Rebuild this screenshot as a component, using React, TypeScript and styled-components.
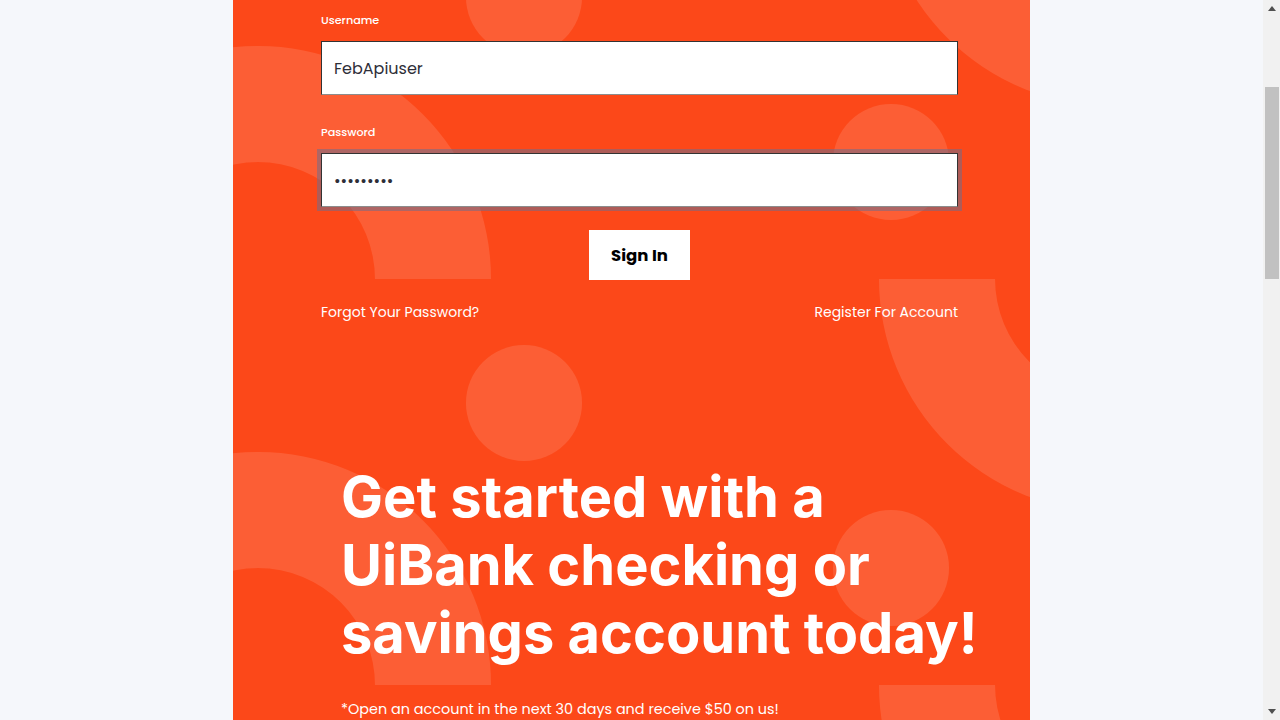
import styled, { createGlobalStyle } from "styled-components";

const GlobalStyle = createGlobalStyle`
    html, body {
        margin: 0;
        padding: 0;
        background: #f5f7fb;
    }
    * {
        box-sizing: border-box;
    }
`;

const Shell = styled.div`
    display: flex;
    align-items: flex-start;
`;

const Page = styled.main`
    flex: 1;
    min-height: 2572px;
    background: #f5f7fb;
`;

const Scrollbar = styled.div`
    position: sticky;
    top: 0;
    width: 17px;
    height: 100vh;
    flex-shrink: 0;
    display: flex;
    flex-direction: column;
    align-items: center;
    background: #f1f1f1;
`;

const ArrowBtn = styled.div`
    width: 17px;
    height: 17px;
    display: flex;
    align-items: center;
    justify-content: center;
`;

const Track = styled.div`
    flex: 1;
    width: 100%;
    padding: 70px 1px 0 2px;
`;

const Thumb = styled.div`
    height: 192px;
    background: #c1c1c1;
`;

const Panel = styled.section`
    position: relative;
    width: 797px;
    min-height: 1400px;
    margin: 0 auto;
    background: #fc4819;
    overflow: hidden;
    font-family: "Poppins", "Open Sans", sans-serif;
    color: #fff;
`;

const Backdrop = styled.svg`
    position: absolute;
    inset: 0;
    width: 100%;
    height: 100%;
    pointer-events: none;
`;

const Content = styled.div`
    position: relative;
    padding-top: 12px;
`;

const Form = styled.form`
    display: flex;
    flex-direction: column;
    padding: 0 72px 0 88px;
`;

const Label = styled.label`
    font-size: 11.2px;
    line-height: 16px;
    font-weight: 500;
    margin-bottom: 13px;
`;

const Input = styled.input<{ $focused?: boolean }>`
    height: 54px;
    width: 100%;
    padding: 0 12px;
    border: 1px solid #333;
    border-bottom-color: #8c8c8c;
    background: #fff;
    color: #2e2e38;
    font-family: "Poppins", "Open Sans", sans-serif;
    font-size: 16px;
    outline: none;
    margin-bottom: ${(p) => (p.type === "password" ? "23px" : "29px")};
    box-shadow: ${(p) => (p.$focused ? "0 0 0 4px rgba(110, 110, 140, 0.55)" : "none")};
`;

const SignIn = styled.button`
    align-self: center;
    width: 101px;
    height: 50px;
    border: none;
    background: #fff;
    color: #000;
    font-family: "Poppins", "Open Sans", sans-serif;
    font-weight: 700;
    font-size: 16.5px;
    cursor: pointer;
    margin-bottom: 21px;
`;

const LinkRow = styled.div`
    display: flex;
    justify-content: space-between;
    align-items: center;
    height: 22px;
`;

const TextLink = styled.a`
    color: #fff;
    text-decoration: none;
    font-size: 14px;
    line-height: 22px;
`;

const Promo = styled.div`
    padding: 140px 0 0 108px;
`;

const Headline = styled.h1`
    margin: 0;
    font-family: "Inter", sans-serif;
    font-weight: 700;
    font-size: 56px;
    line-height: 68px;
`;

const Fine = styled.p`
    margin: 30px 0 0;
    font-size: 14.4px;
    line-height: 24px;
`;

const ring = (cx: number, cy: number, top: boolean) => {
    const ro = 233;
    const ri = 117;
    const s = top ? 1 : 0;
    return `M ${cx - ro} ${cy} A ${ro} ${ro} 0 0 ${s} ${cx + ro} ${cy} L ${cx + ri} ${cy} A ${ri} ${ri} 0 0 ${1 - s} ${cx - ri} ${cy} Z`;
};

const App = () => {
    return (
        <Shell>
            <GlobalStyle />
            <Page>
                <Panel>
                    <Backdrop>
                        <defs>
                            <pattern id="shapes" x="0" y="279" width="797" height="406" patternUnits="userSpaceOnUse">
                                <g fill="rgba(255,255,255,0.12)">
                                    <path d={ring(879, 0, false)} />
                                    <path d={ring(25, 406, true)} />
                                    <circle cx="291" cy="124" r="58" />
                                    <circle cx="658" cy="289" r="58" />
                                </g>
                            </pattern>
                        </defs>
                        <rect width="100%" height="100%" fill="url(#shapes)" />
                    </Backdrop>
                    <Content>
                        <Form onSubmit={(e) => e.preventDefault()}>
                            <Label htmlFor="username">Username</Label>
                            <Input id="username" type="text" defaultValue="FebApiuser" />
                            <Label htmlFor="password">Password</Label>
                            <Input id="password" type="password" defaultValue="123456789" $focused />
                            <SignIn type="submit">Sign In</SignIn>
                            <LinkRow>
                                <TextLink href="#">Forgot Your Password?</TextLink>
                                <TextLink href="#">Register For Account</TextLink>
                            </LinkRow>
                        </Form>
                        <Promo>
                            <Headline>
                                Get started with a
                                <br />
                                UiBank checking or
                                <br />
                                savings account today!
                            </Headline>
                            <Fine>*Open an account in the next 30 days and receive $50 on us!</Fine>
                        </Promo>
                    </Content>
                </Panel>
            </Page>
            <Scrollbar>
                <ArrowBtn>
                    <svg width="8" height="5" viewBox="0 0 8 5">
                        <polygon points="4,0 8,5 0,5" fill="#505050" />
                    </svg>
                </ArrowBtn>
                <Track>
                    <Thumb />
                </Track>
                <ArrowBtn>
                    <svg width="8" height="5" viewBox="0 0 8 5">
                        <polygon points="0,0 8,0 4,5" fill="#505050" />
                    </svg>
                </ArrowBtn>
            </Scrollbar>
        </Shell>
    );
};

export default App;
